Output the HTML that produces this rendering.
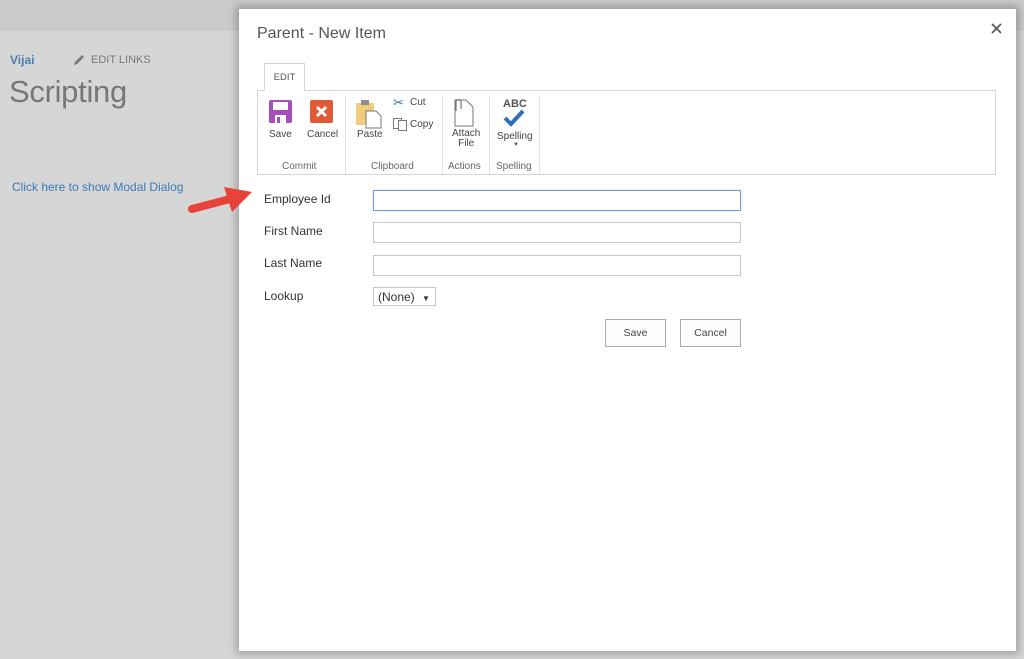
<!DOCTYPE html>
<html><head><meta charset="utf-8"><style>
*{margin:0;padding:0;box-sizing:border-box}
body{width:1024px;height:659px;background:#d6d6d6;position:relative;overflow:hidden;font-family:"Liberation Sans",sans-serif;color:#444}
.top{position:absolute;left:0;top:0;width:1024px;height:31px;background:#cbcbcb}
.abs{position:absolute;white-space:nowrap}
.dlg{position:absolute;left:239px;top:9px;width:777px;height:642px;background:#fff;box-shadow:0 0 8px 3px rgba(0,0,0,.25)}
.lbl{font-size:12px;color:#333}
.inp{position:absolute;left:134px;width:368px;height:21px;border:1px solid #c6c6c6;background:#fff}
.btn{position:absolute;top:310px;width:61px;height:28px;border:1px solid #ababab;background:#fdfdfd;font-size:10.5px;color:#444;text-align:center;line-height:26px}
.rb{font-size:10px;color:#444;text-align:center}
.grp{font-size:10px;color:#666}
.sep{position:absolute;top:87px;width:1px;height:78px;background:#e1e1e1}
</style></head><body>
<div class="top"></div>
<div class="abs" style="left:10px;top:53px;font-size:12px;font-weight:bold;color:#4a7fb5">Vijai</div>
<svg class="abs" style="left:72px;top:53px" width="14" height="14" viewBox="0 0 14 14"><path d="M2 12 L3 9 L10 2 L12 4 L5 11 Z" fill="#777"/></svg>
<div class="abs" style="left:91px;top:54px;font-size:11px;color:#777">EDIT LINKS</div>
<div class="abs" style="left:9px;top:74px;font-size:31px;color:#777;letter-spacing:-0.3px">Scripting</div>
<div class="abs" style="left:12px;top:180px;font-size:12px;color:#3c7ab8">Click here to show Modal Dialog</div>

<div class="dlg">
  <div class="abs" style="left:18px;top:16px;font-size:16px;color:#555">Parent - New Item</div>
  <svg class="abs" style="left:752px;top:14px" width="11" height="11" viewBox="0 0 11 11"><path d="M1 1 L10 10 M10 1 L1 10" stroke="#555" stroke-width="1.6"/></svg>
  <div class="abs" style="left:25px;top:54px;width:41px;height:28px;border:1px solid #d5d5d5;border-bottom:none;background:#fff;font-size:9.5px;color:#555;text-align:center;line-height:28px;z-index:2">EDIT</div>
  <div class="abs" style="left:18px;top:81px;width:739px;height:85px;border:1px solid #d5d5d5"></div>
  <div class="abs" style="left:26px;top:81px;width:39px;height:2px;background:#fff;z-index:3"></div>
  <svg class="abs" style="left:30px;top:91px" width="23" height="23" viewBox="0 0 23 23"><rect x="0" y="0" width="23" height="23" rx="2" fill="#a64fb8"/><rect x="4" y="2" width="15" height="8" fill="#fff"/><rect x="6" y="15" width="11" height="8" fill="#fff"/><rect x="8" y="17" width="3" height="6" fill="#a64fb8"/></svg>
  <div class="abs rb" style="left:30px;top:120px">Save</div>
  <svg class="abs" style="left:71px;top:91px" width="23" height="23" viewBox="0 0 23 23"><rect width="23" height="23" rx="2" fill="#e05a38"/><path d="M7 7 L16 16 M16 7 L7 16" stroke="#fff" stroke-width="3"/></svg>
  <div class="abs rb" style="left:68px;top:120px">Cancel</div>
  <div class="abs grp" style="left:43px;top:152px">Commit</div>
  <div class="sep" style="left:106px"></div>
  <svg class="abs" style="left:117px;top:90px" width="28" height="30" viewBox="0 0 28 30"><rect x="0" y="4" width="18" height="22" fill="#f0cd7d"/><rect x="5" y="1" width="8" height="5" fill="#8c8c8c"/><path d="M10 12 H20 L25 17 V29 H10 Z" fill="#fff" stroke="#777"/></svg>
  <div class="abs rb" style="left:118px;top:120px">Paste</div>
  <div class="abs" style="left:154px;top:86px;font-size:13px;color:#3a72b4">✂</div>
  <div class="abs rb" style="left:171px;top:88px">Cut</div>
  <svg class="abs" style="left:154px;top:109px" width="14" height="13" viewBox="0 0 14 13"><rect x="0.5" y="0.5" width="8" height="10" fill="#fff" stroke="#777"/><rect x="5.5" y="2.5" width="8" height="10" fill="#fff" stroke="#777"/></svg>
  <div class="abs rb" style="left:171px;top:110px">Copy</div>
  <div class="abs grp" style="left:132px;top:152px">Clipboard</div>
  <div class="sep" style="left:203px"></div>
  <svg class="abs" style="left:212px;top:88px" width="24" height="30" viewBox="0 0 24 30"><path d="M4 3 H15 L22 10 V29 H4 Z" fill="#fff" stroke="#777"/><path d="M5 14 V5 a2.5 2.5 0 0 1 5 0 V12" fill="none" stroke="#777" stroke-width="1.2"/></svg>
  <div class="abs rb" style="left:213px;top:120px;line-height:10px">Attach<br>File</div>
  <div class="abs grp" style="left:209px;top:152px">Actions</div>
  <div class="sep" style="left:250px"></div>
  <div class="abs" style="left:264px;top:89px;font-size:11px;font-weight:bold;color:#555">ABC</div>
  <svg class="abs" style="left:264px;top:100px" width="22" height="18" viewBox="0 0 22 18"><path d="M2 9 L8 15 L20 2" fill="none" stroke="#2e6fb5" stroke-width="4"/></svg>
  <div class="abs rb" style="left:258px;top:122px">Spelling</div>
  <div class="abs" style="left:274px;top:133px;font-size:6px;color:#555">▼</div>
  <div class="abs grp" style="left:257px;top:152px">Spelling</div>
  <div class="sep" style="left:300px"></div>
  <div class="abs lbl" style="left:25px;top:183px">Employee Id</div>
  <div class="inp" style="top:181px;border:1px solid #6d9fd9;box-shadow:0 0 1px #9cc1ea"></div>
  <div class="abs lbl" style="left:25px;top:215px">First Name</div>
  <div class="inp" style="top:213px"></div>
  <div class="abs lbl" style="left:25px;top:247px">Last Name</div>
  <div class="inp" style="top:246px"></div>
  <div class="abs lbl" style="left:25px;top:280px">Lookup</div>
  <div class="abs" style="left:134px;top:278px;width:63px;height:19px;border:1px solid #c6c6c6;font-size:12px;color:#333;padding:2px 4px">(None) <span style="font-size:8px;margin-left:4px">▼</span></div>
  <div class="btn" style="left:366px">Save</div>
  <div class="btn" style="left:441px">Cancel</div>
</div>
<svg class="abs" style="left:186px;top:182px" width="72" height="34" viewBox="0 0 72 34"><path d="M6 27 L44 17" stroke="#e8433a" stroke-width="8" stroke-linecap="round"/><path d="M38 5 L66 10 L46 30 Z" fill="#e8433a"/></svg>
</body></html>
